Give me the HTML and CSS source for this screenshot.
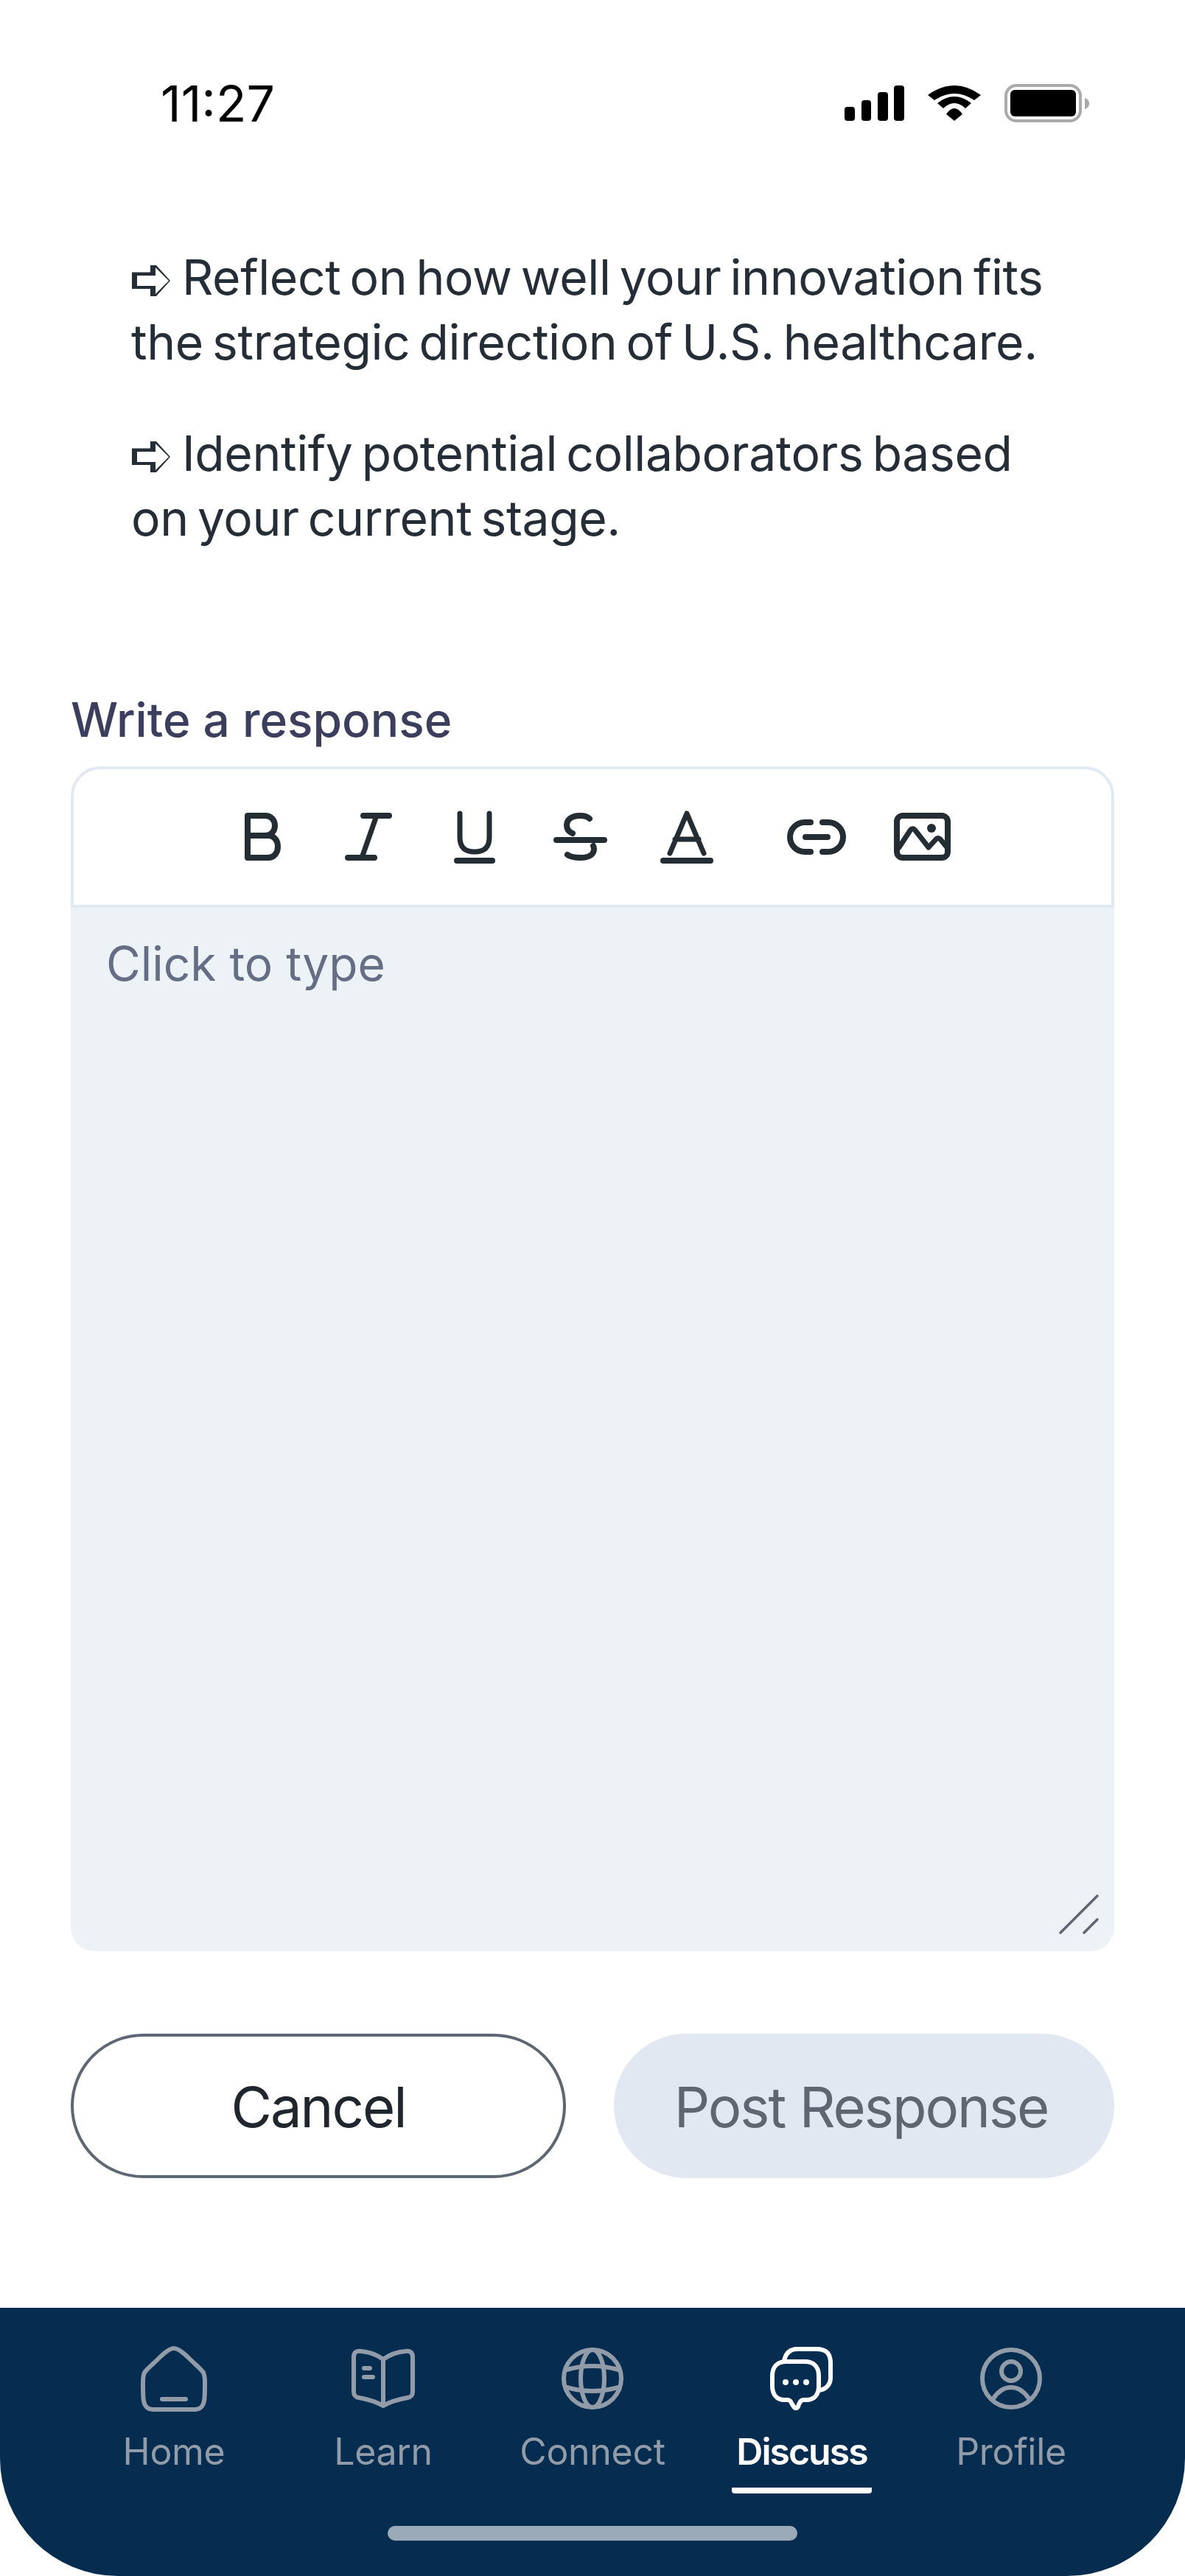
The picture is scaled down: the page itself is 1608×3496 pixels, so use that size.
FILE: index.html
```html
<!DOCTYPE html>
<html>
<head>
    <title>Write a response</title>
    <link rel="stylesheet" href="styles.css">
</head>
<body>
    <div class="screen">
        <div class="status-bar">
            <span class="time">11:27</span>
            <div class="status-icons">
                <svg class="signal" width="81" height="48" viewBox="0 0 81 48">
                    <rect x="0" y="29" width="14" height="19" rx="4"/>
                    <rect x="23" y="20" width="13" height="28" rx="4"/>
                    <rect x="45" y="9" width="14" height="39" rx="4"/>
                    <rect x="67" y="0" width="14" height="48" rx="4"/>
                </svg>
                <svg class="wifi" width="72" height="48" viewBox="0 0 72 48">
                    <path d="M0 13Q36 -13 72 13L63 20Q36 2 9 20Z"/>
                    <path d="M13 24Q36 6 59 24L51 31Q36 17 21 31Z"/>
                    <path d="M25 39Q36 23 47 39L36 48Z"/>
                </svg>
                <svg class="battery" width="115" height="52" viewBox="0 0 115 52">
                    <rect x="2" y="2" width="101" height="48" rx="14" fill="none" stroke="#aaa" stroke-width="4"/>
                    <rect x="8" y="8" width="89" height="36" rx="6"/>
                    <path d="M109 19C113 20 115 23 115 26.500C115 30 113 33 109 34Z" fill="#aaa"/>
                </svg>
            </div>
        </div>

        <main class="content">
            <div class="intro">
                <p><svg class="arrow" width="52" height="42" viewBox="0 0 52 42"><path d="M0 9.500H25V0H33L52 21L33 42H25V32H0Z"/><path class="arrow-inner" d="M7 14H32V3L50 21L32 39V28H7Z"/></svg>Reflect on how well your innovation fits the strategic direction of U.S. healthcare.</p>
                <p><svg class="arrow" width="52" height="42" viewBox="0 0 52 42"><path d="M0 9.500H25V0H33L52 21L33 42H25V32H0Z"/><path class="arrow-inner" d="M7 14H32V3L50 21L32 39V28H7Z"/></svg>Identify potential collaborators based on your current stage.</p>
            </div>

            <label class="field-label">Write a response</label>
            <div class="editor">
                <div class="toolbar">
                    <svg class="tool" viewBox="0 0 96 96"><path d="M28 19h24c8 0 13 6 13 13.500S60 46 52 46H28zM28 46h28c8 0 13 6.500 13 15s-5 15-13 15H28z"/></svg>
                    <svg class="tool" viewBox="0 0 96 96"><path d="M41 19h35M20 76h36"/><path class="thin" d="M59 19L39 76"/></svg>
                    <svg class="tool" viewBox="0 0 96 96"><path class="thin" d="M28 16v32c0 14 7 20 20 20s20-6 20-20V16"/><path d="M24 80h48"/></svg>
                    <svg class="tool" viewBox="0 0 96 96"><path d="M60 23c-3-3-7-4-13-4-11 0-18 5-18 13 0 5 3 9 8 11M65 60c1 2 1 3 1 4 0 8-7 12-18 12-8 0-14-1-18-4M15 52h65"/></svg>
                    <svg class="tool" viewBox="0 0 96 96"><path class="thin" d="M25 70L48 16L71 70M32 51h32" /><path d="M16 80h64"/></svg>
                    <svg class="tool tool-link" viewBox="0 0 96 96"><path d="M40 28h-8a20 20 0 0 0 0 40h8M56 28h8a20 20 0 0 1 0 40h-8M33 48h30"/></svg>
                    <svg class="tool" viewBox="0 0 96 96">
                        <rect x="13" y="19" width="69" height="57" rx="8"/>
                        <path class="thin" d="M16 62L31 39c2-3 5-3 7 0L56 62L66 51c2-2 4-2 6 0L81 62"/>
                        <circle cx="60" cy="36" r="6" class="solid"/>
                    </svg>
                </div>
                <div class="editor-body">
                    <span class="placeholder">Click to type</span>
                    <svg class="resize-handle" width="56" height="56" viewBox="0 0 56 56">
                        <path d="M3 53L53 3M35 53L53 35"/>
                    </svg>
                </div>
            </div>

            <div class="actions">
                <button class="btn btn-cancel">Cancel</button>
                <button class="btn btn-post">Post Response</button>
            </div>
        </main>

        <nav class="tab-bar">
            <ul class="tabs">
                <li class="tab">
                    <svg class="tab-icon" viewBox="0 0 96 96"><path d="M48 7c-6 0-14 7-21 14-7 7-15 13-19 19-2 4-2 8-2 14 0 12 0 20 1 24 1 8 6 12 13 12h56c7 0 12-4 13-12 1-4 1-12 1-24 0-6 0-10-2-14-4-6-12-12-19-19-7-7-15-14-21-14zM32 76h32"/></svg>
                    <span>Home</span>
                </li>
                <li class="tab">
                    <svg class="tab-icon" viewBox="0 0 96 96"><path d="M48 22C40 16 30 12 18 11C11 10 8 13 8 19V66C8 71 10 73 15 74C26 76 38 79 48 85C58 79 70 76 81 74C86 73 88 71 88 66V19C88 13 85 10 78 11C66 12 56 16 48 22ZM48 22V85M22 34h8M22 46h12"/></svg>
                    <span>Learn</span>
                </li>
                <li class="tab">
                    <svg class="tab-icon" viewBox="0 0 96 96"><circle cx="48" cy="48" r="39"/><ellipse cx="48" cy="48" rx="16" ry="39"/><path d="M13 36Q48 26 83 36M13 60Q48 70 83 60"/></svg>
                    <span>Connect</span>
                </li>
                <li class="tab active">
                    <svg class="tab-icon" viewBox="0 0 96 96">
                        <path d="M24 24C26 14 31 8 42 8H68C81 8 87 14 87 27V47C87 56 81 63 71 64"/>
                        <path d="M27 25H52C64 25 71 32 71 44V58C71 70 65 77 54 77H50C47 77 46 79 44 83L43 86C41 89 39 89 37 86L35 83C33 79 32 77 29 77H25C14 77 8 70 8 58V44C8 32 15 25 27 25Z"/>
                        <circle class="dot" cx="26" cy="53" r="4"/><circle class="dot" cx="40" cy="53" r="4"/><circle class="dot" cx="54" cy="53" r="4"/>
                    </svg>
                    <span>Discuss</span>
                </li>
                <li class="tab">
                    <svg class="tab-icon" viewBox="0 0 96 96"><circle cx="48" cy="48" r="39"/><ellipse cx="48" cy="38" rx="13" ry="13"/><path d="M24 75Q34 60 48 60Q62 60 72 75"/></svg>
                    <span>Profile</span>
                </li>
            </ul>
            <div class="home-indicator"></div>
        </nav>
    </div>
</body>
</html>
```

FILE: styles.css
```css
* {
    box-sizing: border-box;
}
body {
    margin: 0;
    background-color: #fff;
    font-family: Inter, "Noto Sans", sans-serif;
}
.screen {
    display: flex;
    flex-direction: column;
    width: 1608px;
    height: 3496px;
    overflow: hidden;
}

/* status bar */
.status-bar {
    display: flex;
    justify-content: space-between;
    align-items: center;
    height: 280px;
    padding: 0 130px 0 218px;
}
.time {
    font-size: 68px;
    color: #000;
}
.status-icons {
    display: flex;
    align-items: center;
    gap: 32px;
}
.status-icons svg {
    display: block;
}

/* main */
.content {
    flex: 1;
    display: flex;
    flex-direction: column;
    padding: 0 96px;
}
.intro {
    height: 657px;
    padding: 52px 82px 0;
}
.intro p {
    margin: 0 0 63px;
    font-size: 66px;
    font-weight: 380;
    line-height: 88px;
    letter-spacing: -0.4px;
    word-spacing: -6px;
    color: #252d37;
}
.arrow {
    margin: 0 16px 0 1px;
    vertical-align: -2px;
    fill: #252d37;
}
.arrow-inner {
    fill: #fff;
}
.field-label {
    font-size: 64px;
    line-height: 80px;
    font-weight: 500;
    color: #3c3e5e;
    margin-bottom: 23px;
}

/* editor */
.editor {
    display: flex;
    flex-direction: column;
    height: 1608px;
    margin-bottom: 112px;
}
.toolbar {
    display: flex;
    justify-content: center;
    align-items: center;
    gap: 48px;
    height: 192px;
    background-color: #fff;
    border: 4px solid #e1e9f2;
    border-radius: 40px 40px 0 0;
}
.tool {
    width: 96px;
    height: 96px;
    fill: none;
    stroke: #252d34;
    stroke-width: 8;
    stroke-linecap: round;
    stroke-linejoin: round;
}
.tool .thin {
    stroke-width: 7;
}
.tool .solid {
    fill: #252d34;
    stroke: none;
}
.tool-link {
    margin-left: 32px;
}
.editor-body {
    position: relative;
    flex: 1;
    padding: 36px 48px;
    background-color: #edf2f7;
    border-radius: 0 0 32px 32px;
}
.placeholder {
    font-size: 64px;
    line-height: 80px;
    color: #666e85;
}
.resize-handle {
    position: absolute;
    right: 20px;
    bottom: 22px;
    fill: none;
    stroke: #5f6672;
    stroke-width: 3.500;
    stroke-linecap: round;
}

/* buttons */
.actions {
    display: flex;
    justify-content: space-between;
}
.btn {
    height: 196px;
    padding-top: 3px;
    border-radius: 98px;
    font-family: Inter, "Noto Sans", sans-serif;
    font-size: 76px;
    font-weight: 430;
    letter-spacing: -2px;
}
.btn-cancel {
    width: 672px;
    background-color: #fff;
    border: 4px solid #5d6673;
    color: #20262e;
}
.btn-post {
    width: 679px;
    padding-right: 14px;
    background-color: #e2e8f1;
    border: none;
    color: #5f6672;
}

/* bottom tabs */
.tab-bar {
    display: flex;
    flex-direction: column;
    align-items: center;
    height: 364px;
    background-color: #062c50;
    border-radius: 0 0 160px 160px;
}
.tabs {
    display: flex;
    list-style-type: none;
    margin: 0;
    padding: 48px 0 0;
}
.tab {
    display: flex;
    flex-direction: column;
    align-items: center;
    width: 284px;
    height: 248px;
    color: #919ca8;
    font-size: 50px;
    line-height: 60px;
    letter-spacing: -0.3px;
}
.tab span {
    margin-top: 21px;
}
.tab-icon {
    width: 96px;
    height: 96px;
    fill: none;
    stroke: #919ca8;
    stroke-width: 6;
    stroke-linecap: round;
    stroke-linejoin: round;
}
.tab.active {
    color: #fff;
    font-weight: 600;
    letter-spacing: -2px;
}
.tab.active span {
    padding: 0 6px 19px;
    border-bottom: 8px solid #fff;
    border-radius: 0 0 4px 4px;
}
.tab.active .tab-icon {
    stroke: #fff;
}
.tab-icon .dot {
    fill: #fff;
    stroke: none;
}
.home-indicator {
    width: 556px;
    height: 20px;
    border-radius: 10px;
    background-color: #9baab9;
}
```
